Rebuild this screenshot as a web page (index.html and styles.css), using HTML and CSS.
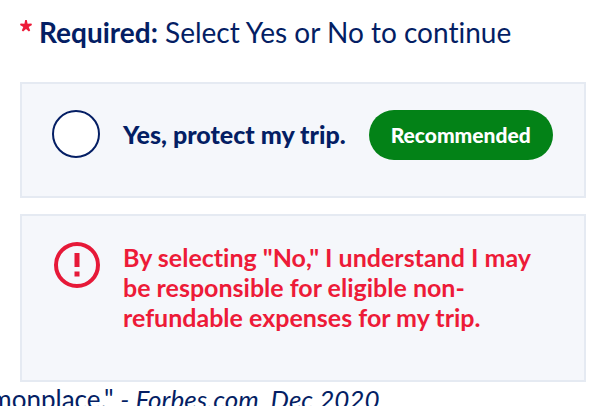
FILE: index.html
```html
<!DOCTYPE html>
<html lang="en">
<head>
    <meta charset="UTF-8">
    <meta name="viewport" content="width=device-width, initial-scale=1.0">
    <title>Trip protection</title>
    <link rel="stylesheet" href="styles.css">
</head>
<body>
    <form class="protection">
        <h1 class="heading">
            <svg class="star" viewBox="0 0 12 12" aria-hidden="true">
                <path d="M5.2 0H6.8L7.6 3.7 11.4 3.5 12 5 8.7 7 10.2 10.6 8.9 11.6 6 9.1 3.1 11.6 1.8 10.6 3.3 7 0 5 .6 3.5 4.4 3.7Z"/>
            </svg>
            <span><strong>Required:</strong> Select Yes or No to continue</span>
        </h1>

        <div class="option">
            <input class="radio" type="radio" id="protectYes" name="protect" value="yes">
            <label class="option-label" for="protectYes">Yes, protect my trip.</label>
            <span class="badge">Recommended</span>
        </div>

        <div class="option option-warning">
            <svg class="alert-icon" viewBox="0 0 48 48" aria-hidden="true">
                <circle cx="25" cy="23" r="21"/>
                <path class="alert-mark" d="M25 11v14M25 29.500v5"/>
            </svg>
            <p class="warning">By selecting "No," I understand I may be responsible for eligible non-refundable expenses for my trip.</p>
        </div>
    </form>

    <p class="quote">commonplace." <cite>- Forbes.com, Dec 2020</cite></p>
</body>
</html>
```

FILE: styles.css
```css
body {
    margin: 0;
    overflow: hidden;
    background: #fff;
    color: #041e64;
    font-family: Lato, "Noto Sans", sans-serif;
    font-variant-ligatures: none;
}

.protection { padding: 12px 28px 0 20px; }

.heading {
    display: flex;
    align-items: flex-start;
    gap: 7px;
    margin: 0 0 30px;
    font-size: 28px;
    font-weight: 400;
    line-height: 40px;
}

.star {
    flex: none;
    width: 12px;
    height: 12px;
    margin-top: 8px;
    fill: #ed1b38;
}

.option {
    display: flex;
    align-items: flex-start;
    gap: 23px;
    margin-bottom: 16px;
    padding: 26px 30px 36px;
    border: 2px solid #e5eaf2;
    background: #f5f7fb;
    font-size: 25px;
    line-height: 30px;
}

.radio {
    flex: none;
    width: 48px;
    height: 48px;
    margin: 0;
    border: 2px solid #041e64;
    border-radius: 50%;
    background: #fff;
    appearance: none;
    cursor: pointer;
}
.radio:checked { background: #041e64; box-shadow: inset 0 0 0 8px #fff; }

.option-label {
    font-weight: 900;
    line-height: 48px;
    white-space: nowrap;
    cursor: pointer;
}

.badge {
    padding: 10px 22px;
    border-radius: 25px;
    background: #038217;
    color: #fff;
    font-size: 21px;
    font-weight: 900;
}

.option-warning { margin-bottom: 0; }

.alert-icon {
    flex: none;
    width: 48px;
    height: 48px;
    fill: none;
    stroke: #e61938;
    stroke-width: 4;
}
.alert-mark { stroke-width: 5; }

.warning {
    margin: 0 0 12px;
    color: #ed1b38;
    font-weight: 700;
}

.quote {
    margin: 2px 0 0 -58px;
    font-size: 26px;
    line-height: 30px;
    white-space: nowrap;
}
```
